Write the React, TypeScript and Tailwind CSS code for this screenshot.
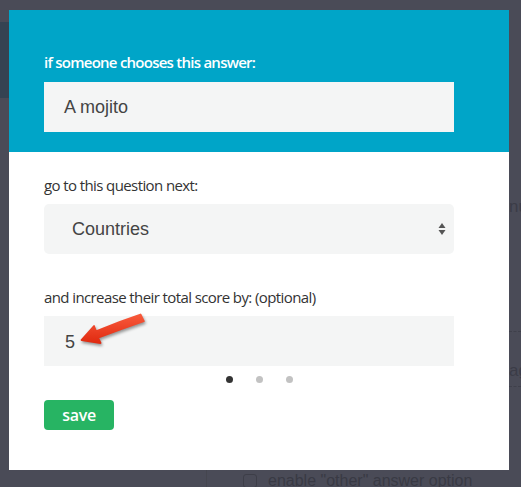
const dots = [true, false, false]

export default function App() {
  return (
    <div className="relative h-[487px] w-[521px] overflow-hidden bg-[#4a4b57] font-['Open_Sans',sans-serif]">
      {/* page behind the overlay */}
      <div className="absolute left-0 top-[22px] h-[76px] w-[9px] bg-[#354352]" />
      <div className="absolute left-[206px] top-[440px] h-[47px] w-px bg-[#45464f]" />
      <div className="absolute left-[509px] top-[194px] text-[17px] text-[#3b3c47] font-['Liberation_Sans',sans-serif]">nu</div>
      <div className="absolute left-[509px] top-[331px] w-[12px] border-t border-dashed border-[#3f404b]" />
      <div className="absolute left-[509px] top-[358px] text-[17px] text-[#3b3c47] font-['Liberation_Sans',sans-serif]">ag</div>
      <div className="absolute left-[509px] top-[386px] w-[12px] border-t border-dashed border-[#3f404b]" />
      <div className="absolute left-[243px] top-[473px] flex items-center gap-[11px]">
        <span className="h-[14px] w-[14px] rounded-[3px] border border-[#3d3e48]" />
        <span className="text-[16px] leading-none text-[#393a44] font-['Liberation_Sans',sans-serif]">enable "other" answer option</span>
      </div>

      {/* modal */}
      <div className="relative ml-[9px] mt-[10px] w-[500px] bg-white">
        <div className="bg-[#00a5c8] px-[35px] pb-[20px] pt-[42px]">
          <label className="block text-[15px] font-semibold tracking-[-0.05em] leading-[20px] text-white">
            if someone chooses this answer:
          </label>
          <div className="mt-[10px] flex h-[50px] w-[410px] items-center bg-[#f4f5f5] px-[20px] text-[18px] text-[#444] font-['Liberation_Sans',sans-serif]">
            A mojito
          </div>
        </div>

        <div className="px-[35px] pb-[40px] pt-[23px]">
          <label className="block text-[15px] tracking-[-0.04em] leading-[20px] text-[#333]">
            go to this question next:
          </label>
          <div className="mt-[9px] flex h-[50px] w-[410px] items-center justify-between rounded-[5px] bg-[#f4f5f5] pl-[28px] pr-[8px] text-[18px] text-[#444] font-['Liberation_Sans',sans-serif]">
            <span>Countries</span>
            <svg width="8" height="14" viewBox="0 0 8 14">
              <path d="M4 1 L7.5 6 H0.5 Z" fill="#555" />
              <path d="M4 13 L7.5 8 H0.5 Z" fill="#555" />
            </svg>
          </div>

          <label className="mt-[33px] block text-[15px] tracking-[-0.04em] leading-[20px] text-[#333]">
            and increase their total score by: (optional)
          </label>
          <div className="relative mt-[9px] flex h-[50px] w-[410px] items-center bg-[#f4f5f5] px-[21px] text-[18px] text-[#444] font-['Liberation_Sans',sans-serif]">
            <span className="pt-[2px]">5</span>
            <svg
              className="absolute left-[30px] top-[-6px] drop-shadow-[1px_2px_1.5px_rgba(0,0,0,0.4)]"
              width="80"
              height="40"
              viewBox="0 0 80 40"
            >
              <defs>
                <linearGradient id="ar" x1="0" y1="0" x2="0" y2="1">
                  <stop offset="0" stopColor="#f85a3c" />
                  <stop offset="1" stopColor="#e02a10" />
                </linearGradient>
              </defs>
              <path
                d="M7.5 30 L20 16 L22 21.4 Q45 11.5 66.5 4.5 L69.8 11.2 Q46 19.5 24 27.6 L26.5 33 Z"
                fill="url(#ar)"
                stroke="url(#ar)"
                strokeWidth="1.8"
                strokeLinejoin="round"
              />
            </svg>
          </div>

          <div className="mt-[10px] flex justify-center gap-[23px]">
            {dots.map((on, i) => (
              <span
                key={i}
                className={on ? 'h-[7px] w-[7px] rounded-full bg-[#333]' : 'h-[7px] w-[7px] rounded-full bg-[#c2c2c2]'}
              />
            ))}
          </div>

          <button className="mt-[17px] flex h-[30px] w-[70px] items-center justify-center rounded-[4px] bg-[#27b463] text-[16px] font-semibold tracking-[-0.02em] text-white">
            save
          </button>
        </div>
      </div>
    </div>
  )
}
